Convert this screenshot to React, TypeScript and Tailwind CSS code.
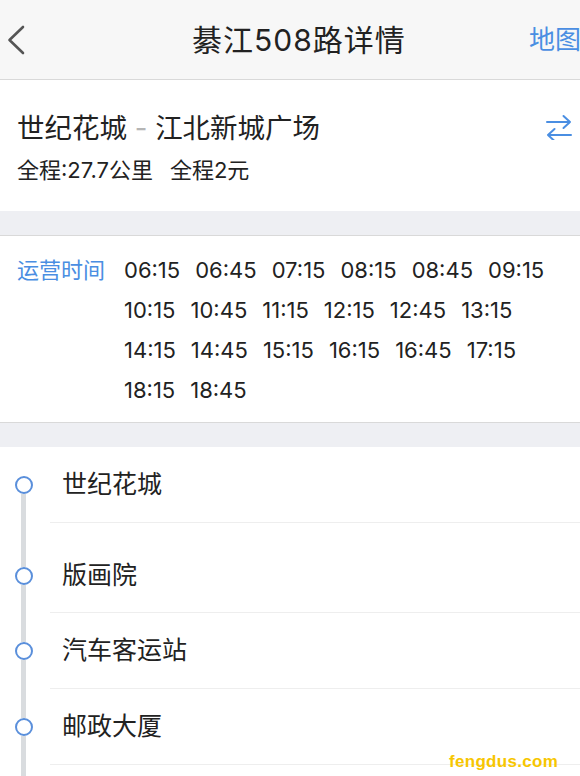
import React from "react";

const times = [
  "06:15", "06:45", "07:15", "08:15", "08:45", "09:15",
  "10:15", "10:45", "11:15", "12:15", "12:45", "13:15",
  "14:15", "14:45", "15:15", "16:15", "16:45", "17:15",
  "18:15", "18:45",
];

const stops = [
  { name: "世纪花城", top: "h-[29px]", pad: "h-[76px]", first: true },
  { name: "版画院", top: "h-[44px]", pad: "h-[90px] pt-[16px]", first: false },
  { name: "汽车客运站", top: "h-[29px]", pad: "h-[76px]", first: false },
  { name: "邮政大厦", top: "h-[29px]", pad: "h-[76px]", first: false },
  { name: "", top: "h-[29px]", pad: "h-[76px]", first: false },
];

export default function App() {
  return (
    <div
      className="relative w-[580px] h-[776px] overflow-hidden bg-white text-[#222]"
      style={{ fontFamily: 'Inter, "Noto Sans CJK SC", sans-serif' }}
    >
      {/* Header */}
      <div className="h-[80px] bg-[#f7f7f7] border-b border-[#d9d9d9] flex items-center overflow-hidden">
        <div className="w-[192px] flex items-center pl-[7px]">
          <svg width="18" height="30" viewBox="0 0 18 30" fill="none">
            <polyline points="16,2 2.5,15 16,28" stroke="#555" strokeWidth="2.6" strokeLinecap="round" strokeLinejoin="round" />
          </svg>
        </div>
        <div className="text-[30px] leading-[40px] tracking-[1px] whitespace-nowrap text-[#222]">綦江508路详情</div>
        <div className="flex-1" />
        <div className="text-[26px] leading-[36px] text-[#4a8ee2] whitespace-nowrap mr-[-1px]">地图</div>
      </div>

      {/* Route info */}
      <div className="h-[131px] flex items-start pl-[17px] pr-[8px] pt-[32px]">
        <div className="flex-1">
          <div className="text-[27.5px] leading-[32px] whitespace-nowrap">
            世纪花城 <span className="text-[#b5b5b5]">-</span> 江北新城广场
          </div>
          <div className="mt-[12px] text-[22px] leading-[28px] whitespace-nowrap flex gap-[17px]">
            <span>全程:27.7公里</span>
            <span>全程2元</span>
          </div>
        </div>
        <svg width="26" height="26" viewBox="0 0 26 26" fill="none" className="mt-[2px]">
          <path d="M1 8 H24 M17.5 2 L24 8 L17.5 14" stroke="#4a8ee2" strokeWidth="2" strokeLinecap="round" strokeLinejoin="round" />
          <path d="M25 21 H2 M8.5 15 L2 21 L8.5 27" stroke="#4a8ee2" strokeWidth="2" strokeLinecap="round" strokeLinejoin="round" />
        </svg>
      </div>

      <div className="h-[25px] bg-[#eeeff3] border-b border-[#d9d9d9]" />

      {/* Schedule */}
      <div className="flex pt-[14px] pb-[12px] border-b border-[#d9d9d9]">
        <div className="w-[124px] pl-[17px] text-[22px] leading-[40px] text-[#4a8ee2] whitespace-nowrap">运营时间</div>
        <div className="flex-1 flex flex-wrap gap-x-[15px] text-[22px] leading-[40px] text-[#222] pr-[20px]">
          {times.map((t) => (
            <span key={t}>{t}</span>
          ))}
        </div>
      </div>

      <div className="h-[24px] bg-[#eeeff3]" />

      {/* Stops */}
      <div className="flex flex-col">
        {stops.map((s, i) => (
          <div key={i} className="flex">
            <div className="w-[47px] flex flex-col items-center">
              <div className={`${s.top} w-[5px] ${s.first ? "bg-transparent" : "bg-[#d9dcdf]"}`} />
              <div className="w-[18px] h-[18px] rounded-full border-2 border-[#5a8fdb] bg-white shrink-0" />
              <div className="flex-1 w-[5px] bg-[#d9dcdf]" />
            </div>
            <div className={`flex-1 ml-[3px] border-b border-[#eeeeee] flex items-center pl-[12px] text-[25px] ${s.pad}`}>
              {s.name}
            </div>
          </div>
        ))}
      </div>

      <div
        className="absolute left-[449px] top-[750px] text-[17px] leading-[24px] font-bold text-[#f7c600] tracking-[0.3px]"
        style={{ fontFamily: '"Liberation Sans", Arial, sans-serif' }}
      >
        fengdus.com
      </div>
    </div>
  );
}
